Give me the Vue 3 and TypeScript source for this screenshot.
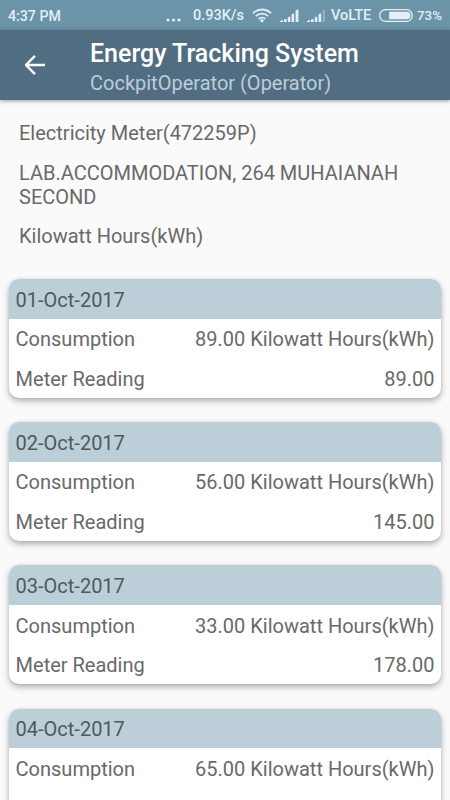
<script setup lang="ts">
interface Entry {
  date: string
  consumption: string
  reading?: string
}

const unit = 'Kilowatt Hours(kWh)'
const entries: Entry[] = [
  { date: '01-Oct-2017', consumption: '89.00', reading: '89.00' },
  { date: '02-Oct-2017', consumption: '56.00', reading: '145.00' },
  { date: '03-Oct-2017', consumption: '33.00', reading: '178.00' },
  { date: '04-Oct-2017', consumption: '65.00' },
]
</script>

<template>
  <div class="screen">
    <div class="status">
      <span class="clock">4:37 PM</span>
      <svg class="dots" width="15" height="4" viewBox="0 0 15 4">
        <circle cx="2" cy="2" r="1.6" /><circle cx="7.5" cy="2" r="1.6" /><circle cx="13" cy="2" r="1.6" />
      </svg>
      <span class="speed">0.93K/s</span>
      <svg class="wifi" width="20" height="15" viewBox="0 0 20 15">
        <g fill="none" stroke="#e2eff6" stroke-width="1.8">
          <path d="M1 5.3a12.6 12.6 0 0 1 18 0" />
          <path d="M3.9 8.2a8.6 8.6 0 0 1 12.2 0" />
          <path d="M6.7 11a4.7 4.7 0 0 1 6.6 0" />
        </g>
        <circle cx="10" cy="12.6" r="1.7" />
      </svg>
      <svg class="signal first" width="19" height="13" viewBox="0 0 19 13">
        <path d="M0 13v-1l3-1v2zM4 10.5l2.5-.8V13H4zM7.8 8.2l2.5-.8V13H7.8zM11.6 5.2l2.5-1V13h-2.5zM15.6 1.5 18.4.3V13h-2.8z" />
      </svg>
      <svg class="signal second" width="19" height="13" viewBox="0 0 19 13">
        <path d="M0 13v-1l3-1v2zM4 10.5l2.5-.8V13H4zM7.8 8.2l2.5-.8V13H7.8zM11.6 5.2l2.5-1V13h-2.5z" />
        <path d="M15.6 1.5 18 .3V13h-2.4z" opacity=".3" />
      </svg>
      <span class="network">VoLTE</span>
      <svg class="battery" width="35" height="13" viewBox="0 0 35 13">
        <rect x=".7" y=".7" width="32.6" height="11.6" rx="5.8" fill="none" stroke="#e2eff6" stroke-width="1.3" />
        <path d="M10.2 2.8h17.6a3.7 3.7 0 0 1 0 7.4H10.2z" />
      </svg>
      <span class="percent">73%</span>
    </div>

    <header class="appbar">
      <svg class="back" width="20" height="20" viewBox="0 0 20 20">
        <path d="M20 10H1.8M10 .9.9 10l9.1 9.1" fill="none" stroke="#fff" stroke-width="2.4" />
      </svg>
      <div class="titles">
        <h1>Energy Tracking System</h1>
        <p>CockpitOperator (Operator)</p>
      </div>
    </header>

    <section class="meter">
      <p>Electricity Meter(472259P)</p>
      <p>LAB.ACCOMMODATION, 264 MUHAIANAH SECOND</p>
      <p>{{ unit }}</p>
    </section>

    <main class="cards">
      <article v-for="entry in entries" :key="entry.date" class="card">
        <div class="row date">{{ entry.date }}</div>
        <div class="row"><span>Consumption</span><span>{{ entry.consumption }} {{ unit }}</span></div>
        <div v-if="entry.reading" class="row"><span>Meter Reading</span><span>{{ entry.reading }}</span></div>
      </article>
    </main>
  </div>
</template>

<style>
body {
  margin: 0;
  overflow: hidden;
}
</style>

<style scoped>
.screen {
  width: 450px;
  height: 800px;
  overflow: hidden;
  display: flex;
  flex-direction: column;
  background: #fafafa;
  color: #696969;
  font-family: Roboto, sans-serif;
  font-size: 20px;
  line-height: 24px;
}
.screen svg {
  flex: none;
  fill: #e2eff6;
}
.status {
  flex: none;
  height: 30px;
  box-sizing: border-box;
  padding: 1px 8px 0;
  display: flex;
  align-items: center;
  background: #6c94a9;
  color: #e2eff6;
  font-size: 14.2px;
  font-weight: 500;
  line-height: 30px;
  white-space: nowrap;
}
.clock {
  width: 158px;
}
.dots {
  margin-top: 8px;
}
.speed {
  width: 52px;
  margin-left: 12px;
  padding-top: 1px;
  font-size: 14.5px;
}
.wifi {
  margin-left: 7px;
}
.first {
  margin-left: 8px;
}
.second {
  margin-left: 8px;
}
.network {
  width: 41px;
  margin-left: 5px;
  padding-top: 1px;
  font-size: 14.5px;
}
.battery {
  margin-left: 7px;
}
.percent {
  margin-left: 3px;
  font-size: 13.4px;
}
.appbar {
  flex: none;
  height: 70px;
  box-sizing: border-box;
  display: flex;
  padding: 8px 0 0 25px;
  background: #516d81;
  box-shadow: 0 1px 4px rgba(0, 0, 0, 0.4);
}
.back {
  margin-top: 17px;
}
.titles {
  margin-left: 45px;
}
.titles h1 {
  margin: 0;
  color: #fff;
  font-size: 25px;
  font-weight: 500;
  line-height: 31px;
}
.titles p {
  margin: 2px 0 0;
  color: #bccdd9;
}
.meter {
  flex: none;
  display: flex;
  flex-direction: column;
  gap: 15.5px;
  padding: 21px 19px 0;
}
.meter p {
  margin: 0;
}
.cards {
  display: flex;
  flex-direction: column;
  gap: 24.7px;
  padding: 31px 9.2px 0;
}
.card {
  flex: none;
  min-height: 118.5px;
  overflow: hidden;
  border-radius: 10px;
  background: #fff;
  box-shadow: 0 3px 6px rgba(0, 0, 0, 0.3), 0 0 3px rgba(0, 0, 0, 0.08);
}
.row {
  height: 39.5px;
  box-sizing: border-box;
  padding: 2px 6.4px 0;
  display: flex;
  align-items: center;
  justify-content: space-between;
}
.date {
  background: #bccfd9;
  color: #4f595e;
}
</style>
